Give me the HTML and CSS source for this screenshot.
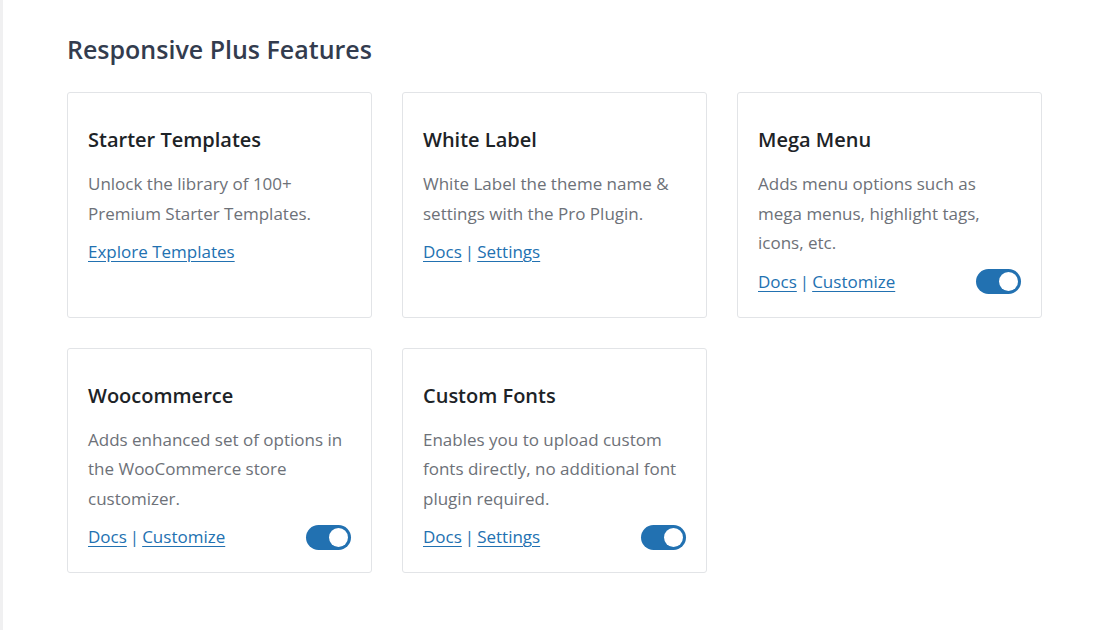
FILE: index.html
```html
<!DOCTYPE html>
<html lang="en">
<head>
<meta charset="utf-8">
<title>Responsive Plus Features</title>
<link rel="stylesheet" href="styles.css">
</head>
<body>
<div class="page">
  <main class="content">
    <h1 class="heading">Responsive Plus Features</h1>
    <div class="grid">
      <section class="card">
        <h2 class="card-title">Starter Templates</h2>
        <p class="card-desc">Unlock the library of 100+ Premium Starter Templates.</p>
        <div class="card-foot">
          <div class="links"><a href="#">Explore Templates</a></div>
        </div>
      </section>
      <section class="card">
        <h2 class="card-title">White Label</h2>
        <p class="card-desc">White Label the theme name &amp; settings with the Pro Plugin.</p>
        <div class="card-foot">
          <div class="links"><a href="#">Docs</a><span class="sep">|</span><a href="#">Settings</a></div>
        </div>
      </section>
      <section class="card">
        <h2 class="card-title">Mega Menu</h2>
        <p class="card-desc">Adds menu options such as mega menus, highlight tags, icons, etc.</p>
        <div class="card-foot">
          <div class="links"><a href="#">Docs</a><span class="sep">|</span><a href="#">Customize</a></div>
          <span class="toggle"><span class="knob"></span></span>
        </div>
      </section>
      <section class="card">
        <h2 class="card-title">Woocommerce</h2>
        <p class="card-desc">Adds enhanced set of options in the WooCommerce store customizer.</p>
        <div class="card-foot">
          <div class="links"><a href="#">Docs</a><span class="sep">|</span><a href="#">Customize</a></div>
          <span class="toggle"><span class="knob"></span></span>
        </div>
      </section>
      <section class="card">
        <h2 class="card-title">Custom Fonts</h2>
        <p class="card-desc">Enables you to upload custom fonts directly, no additional font plugin required.</p>
        <div class="card-foot">
          <div class="links"><a href="#">Docs</a><span class="sep">|</span><a href="#">Settings</a></div>
          <span class="toggle"><span class="knob"></span></span>
        </div>
      </section>
    </div>
  </main>
</div>
</body>
</html>
```

FILE: styles.css
```css
html, body {
  margin: 0;
  padding: 0;
  background: #ffffff;
}
body {
  font-family: "Open Sans", "Liberation Sans", sans-serif;
  color: #1d2327;
}
.page {
  min-height: 630px;
  border-left: 3px solid #f0f0f1;
  box-sizing: border-box;
}
.content {
  padding: 30px 0 0 64px;
  width: 975px;
}
.heading {
  margin: 0 0 24px;
  font-size: 25px;
  line-height: 38px;
  font-weight: 600;
  color: #333c4e;
}
.grid {
  display: grid;
  grid-template-columns: repeat(3, 305px);
  column-gap: 30px;
  row-gap: 30px;
}
.card {
  border: 1px solid #e2e4e7;
  border-radius: 3px;
  padding: 30px 20px 20px 20px;
  display: flex;
  flex-direction: column;
  min-height: 170px;
}
.card-title {
  margin: 0 0 12px;
  font-size: 20px;
  line-height: 34px;
  font-weight: 600;
  color: #1d2327;
}
.card-desc {
  margin: 0 0 9px;
  font-size: 17px;
  line-height: 29.5px;
  color: #6d7178;
}
.card-foot {
  display: flex;
  align-items: center;
  justify-content: space-between;
  min-height: 30px;
}
.links {
  font-size: 17px;
  line-height: 30px;
  color: #2271b1;
}
.links a {
  color: #2271b1;
  text-decoration: underline;
  text-underline-offset: 3px;
}
.sep {
  margin: 0 3px;
  color: #2271b1;
}
.toggle {
  width: 45px;
  height: 25px;
  border-radius: 13px;
  background: #2271b1;
  display: flex;
  align-items: center;
  justify-content: flex-end;
  padding: 0 3px;
  box-sizing: border-box;
}
.knob {
  width: 19px;
  height: 19px;
  border-radius: 50%;
  background: #ffffff;
}
```
